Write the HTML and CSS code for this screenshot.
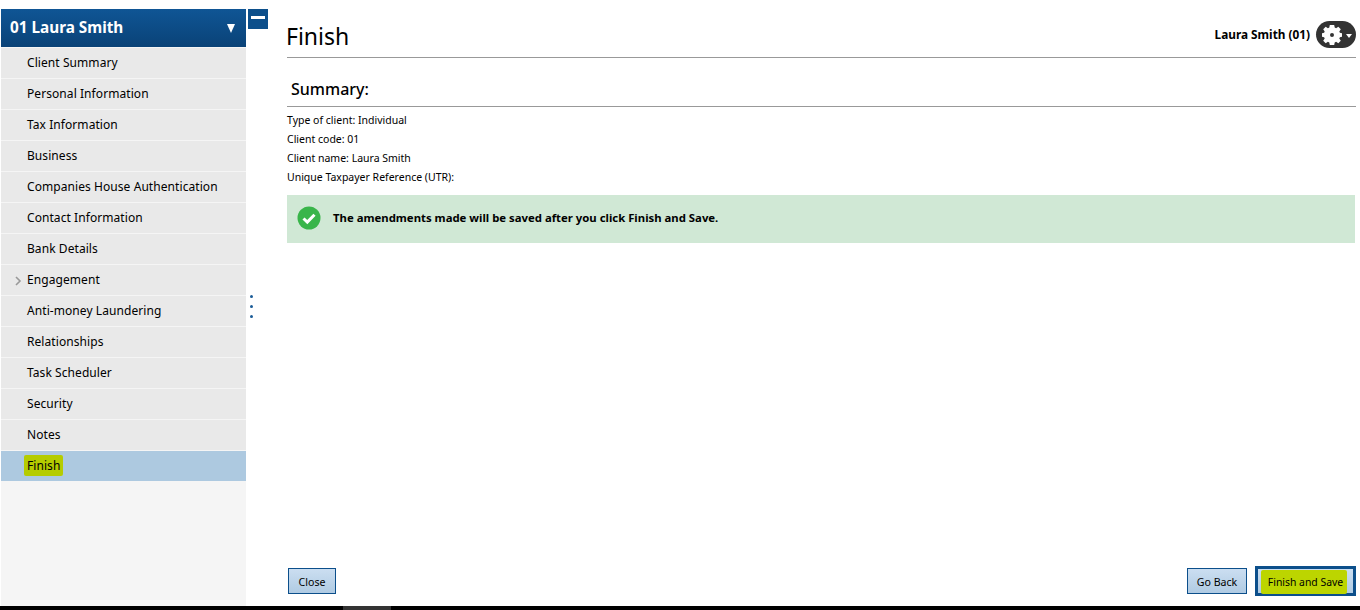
FILE: index.html
```html
<!DOCTYPE html>
<html lang="en">
<head>
<meta charset="utf-8">
<title>Finish</title>
<link rel="stylesheet" href="styles.css">
</head>
<body>
<div class="app">
  <aside class="sidebar">
    <div class="client-head"><span>01 Laura Smith</span><span class="caret"></span></div>
    <ul class="nav">
      <li>Client Summary</li>
      <li>Personal Information</li>
      <li>Tax Information</li>
      <li>Business</li>
      <li>Companies House Authentication</li>
      <li>Contact Information</li>
      <li>Bank Details</li>
      <li class="has-sub"><svg class="chev" width="7" height="10" viewBox="0 0 7 10"><path d="M1 1l4 4-4 4" fill="none" stroke="#999" stroke-width="1.6"/></svg>Engagement</li>
      <li>Anti-money Laundering</li>
      <li>Relationships</li>
      <li>Task Scheduler</li>
      <li>Security</li>
      <li>Notes</li>
      <li class="active"><mark class="hl hl-nav">Finish</mark></li>
    </ul>
  </aside>
  <div class="splitter">
    <button class="collapse" aria-label="Collapse"><span></span></button>
    <div class="dots"><i></i><i></i><i></i></div>
  </div>
  <main class="content">
    <header class="top">
      <h1>Finish</h1>
      <div class="user">
        <strong>Laura Smith (01)</strong>
        <div class="gear-pill">
          <svg width="20" height="20" viewBox="0 0 20 20"><path fill="#fff" fill-rule="evenodd" d="M7.8 0h4.4l.5 2.6 1.4.6 2.2-1.5 2.5 2.5-1.5 2.2.6 1.4 2.6.5v3.4l-2.6.5-.6 1.4 1.5 2.2-2.5 2.5-2.2-1.5-1.4.6-.5 2.6H7.8l-.5-2.6-1.4-.6-2.2 1.5-2.5-2.5 1.5-2.2-.6-1.4L0 11.7V8.3l2.1-.5.6-1.4-1.5-2.2 2.5-2.5 2.2 1.5 1.4-.6zM10 8a2 2 0 1 0 0 4 2 2 0 0 0 0-4z"/></svg>
          <span class="mini-caret"></span>
        </div>
      </div>
    </header>
    <section class="summary">
      <h2>Summary:</h2>
      <p>Type of client: Individual</p>
      <p>Client code: 01</p>
      <p>Client name: Laura Smith</p>
      <p>Unique Taxpayer Reference (UTR):</p>
    </section>
    <div class="notice">
      <svg width="24" height="24" viewBox="0 0 24 24"><circle cx="12" cy="12" r="11.5" fill="#39b54a"/><path d="M6.5 12.5l3.8 3.6 7.2-7.4" fill="none" stroke="#fff" stroke-width="3"/></svg>
      <b>The amendments made will be saved after you click Finish and Save.</b>
    </div>
    <footer class="actions">
      <button class="btn close">Close</button>
      <div class="right">
        <button class="btn back">Go Back</button>
        <button class="btn primary"><mark class="hl hl-btn">Finish and Save</mark></button>
      </div>
    </footer>
  </main>
</div>
<div class="taskbar"><span></span></div>
</body>
</html>
```
FILE: styles.css
```css
* { box-sizing: border-box; }
html, body { margin: 0; height: 610px; overflow: hidden; background: #fff; }
body { display: flex; flex-direction: column; font-family: "Noto Sans", "DejaVu Sans", sans-serif; font-size: 12px; color: #000; }
.app { flex: 1; display: flex; min-height: 0; padding-left: 1px; }
.sidebar { width: 245px; margin-top: 9px; background: #f5f5f5; }
.client-head { height: 38px; display: flex; align-items: center; justify-content: space-between; padding: 0 11px 2px 9px; background: linear-gradient(#0f5595, #0a4277); color: #fff; font-weight: 700; font-size: 15.3px; }
.caret { width: 0; height: 0; border-left: 4.5px solid transparent; border-right: 4.5px solid transparent; border-top: 9px solid #fff; margin-top: 2px; }
.nav { list-style: none; margin: 1px 0 0; padding: 0; }
.nav li { position: relative; height: 30px; margin-bottom: 1px; padding-left: 26px; line-height: 29px; background: #e9e9e9; letter-spacing: .07px; }
.nav li.active { background: #adc9e0; }
.chev { position: absolute; left: 14px; top: 11px; }
.hl { background: #b5cc00; color: inherit; padding: 2px 3px; margin: 0 -3px; border-radius: 2px; }
.hl-btn { background: #bcd500; padding: 5px 4px 5px 7px; margin: 0 0 0 -3px; }
.splitter { width: 41px; position: relative; }
.collapse { display: flex; align-items: center; justify-content: center; width: 20px; height: 20px; margin: 9px 0 0 2px; padding: 0 0 4px; border: 0; background: #0c4f8b; }
.collapse span { width: 14px; height: 3px; background: #fff; }
.dots { position: absolute; left: 4px; top: 295px; display: flex; flex-direction: column; gap: 7px; }
.dots i { width: 3px; height: 3px; border-radius: 50%; background: #1b5c97; }
.content { flex: 1; display: flex; flex-direction: column; padding-right: 4px; min-width: 0; }
.top { height: 58px; display: flex; align-items: flex-start; justify-content: space-between; border-bottom: 1px solid #999; }
h1 { margin: 18px 0 0 -1px; font-size: 23px; font-weight: 400; line-height: 36px; }
.user { display: flex; align-items: center; gap: 6px; margin-top: 21px; }
.user strong { font-size: 11.8px; padding-bottom: 2px; }
.gear-pill { display: flex; align-items: center; gap: 4px; width: 40px; height: 27px; padding-left: 6px; border-radius: 14px; background: #333; }
.gear-pill svg { flex: none; }
.mini-caret { width: 0; height: 0; border-left: 3px solid transparent; border-right: 3px solid transparent; border-top: 4px solid #fff; margin-top: 2px; }
h2 { margin: 19px 0 0; height: 30px; padding-left: 4px; border-bottom: 1px solid #999; font-size: 16px; font-weight: 500; line-height: 24px; }
.summary p { margin: 0; height: 19px; font-size: 10.5px; line-height: 19px; }
.summary h2 + p { margin-top: 4px; }
.notice { display: flex; align-items: center; gap: 12px; height: 48px; margin: 8px 1px 0 0; padding: 0 0 3px 10px; background: #d0e8d5; }
.notice b { font-size: 11.35px; }
.actions { margin-top: auto; margin-bottom: 10px; display: flex; align-items: flex-end; justify-content: space-between; padding-left: 1px; }
.right { display: flex; align-items: center; gap: 8px; }
.btn { height: 26px; min-width: 48px; padding: 1px 7px 0; border: 1px solid #0c4f8b; background: linear-gradient(#cbdef1, #b0cbe3); font: 10.6px "Noto Sans", "DejaVu Sans", sans-serif; color: #000; }
.close { margin-bottom: 2px; }
.back { width: 60px; }
.btn.primary { height: 30px; width: 101px; padding: 1px 0 0; border-width: 3px; font-size: 10.4px; }
.taskbar { height: 4px; flex: none; background: #000; padding-left: 343px; }
.taskbar span { display: block; width: 48px; height: 4px; background: #333; }
```
